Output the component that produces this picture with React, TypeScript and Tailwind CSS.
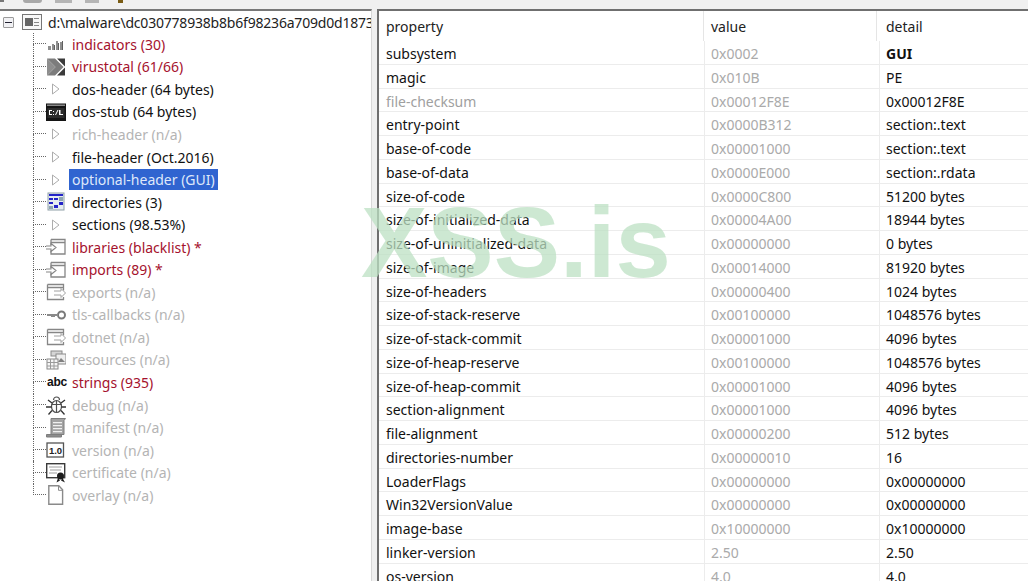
import type { ReactNode } from "react";

type Tone = "red" | "black" | "gray" | "selected";

interface TreeItem {
  label: string;
  tone: Tone;
  icon: ReactNode;
}

function Svg({ children }: { children: ReactNode }) {
  return (
    <svg width="20" height="20" viewBox="0 0 20 20" className="shrink-0">
      {children}
    </svg>
  );
}

const Bars = (
  <Svg>
    <path d="M2 12h3v4H2zM6 10h2v6H6zM10 7h2v9h-2zM14 8h2v8h-2z" fill="#8f8f8f" />
    <path d="M8 11h1v5H8zM12 9h1v7h-1zM16 7h1v9h-1z" fill="#5f5f5f" />
  </Svg>
);
const VirusTotal = (
  <Svg>
    <path d="M1 1.500h8l8.500 8.500L9 18.500H1l8.500-8.500z" fill="#7c7c7c" />
    <path d="M1 1.500v17l8.500-8.500z" fill="#8e8e8e" />
    <path d="M11 1.500h8v8zM11 18.500h8v-8z" fill="#3a3a3a" />
  </Svg>
);
const Arrow = (
  <Svg>
    <path d="M6.500 5l6.500 5-6.500 5z" fill="#fff" stroke="#adadad" />
  </Svg>
);
const Console = (
  <Svg>
    <rect x="0" y="1.500" width="20" height="17.500" fill="#141414" />
    <rect x="1" y="2.500" width="18" height="1.500" fill="#8a8a8a" />
    <rect x="1.500" y="6" width="17" height="10" fill="#2c2c2c" />
    <path d="M3 8h3v1H4v3h2v1H3zM7 9h1v1H7zM7 12h1v1H7zM9 13l2.500-5h1L10 13zM13 8h1.500v4H17v1h-4z" fill="#fff" />
  </Svg>
);
const Directories = (
  <Svg>
    <rect x="2" y="1" width="16" height="17" fill="#e6edf0" stroke="#8fa0a8" />
    <path d="M3 2h14v2H3zM3 6h4v2H3zM8 6h4v2H8zM3 10h4v2H3zM13 10h4v3h-4zM8 13h4v3H8z" fill="#2424c8" />
    <path d="M13 5h4v4h-4zM3 14h4v3H3z" fill="#8fa6b2" />
  </Svg>
);
const LibraryIn = (
  <Svg>
    <path d="M5 2.500h14v14.500H5v-3.500M5 8V2.500M5 5.500h14" fill="#fff" stroke="#868686" strokeWidth="1.300" />
    <path d="M0 9h5V6.500l5 4-5 4V12H0" fill="#fff" stroke="#868686" strokeWidth="1.100" />
  </Svg>
);
const LibraryOut = (
  <Svg>
    <path d="M1.500 2.500h16v6M17.500 15v2.500h-16v-15M1.500 5.500h16" fill="#fff" stroke="#868686" strokeWidth="1.300" />
    <path d="M8 9h7V6.500l4.500 4.500-4.500 4.500V13H8" fill="#fff" stroke="#a0a0a0" />
  </Svg>
);
const Key = (
  <Svg>
    <circle cx="15.500" cy="10" r="3.500" fill="#fff" stroke="#7a7a7a" strokeWidth="2" />
    <path d="M1 9h11v2H9v1H5v-1H1z" fill="#8a8a8a" />
  </Svg>
);
const Resources = (
  <Svg>
    <rect x="5" y="1" width="11" height="5" fill="#d5d5d5" stroke="#8a8a8a" />
    <rect x="10" y="4" width="10" height="10" fill="#eee" stroke="#8a8a8a" />
    <path d="M12 12l3-4 4 4z" fill="#808080" />
    <rect x="1" y="9" width="11" height="10" fill="#f6f6f6" stroke="#8a8a8a" />
    <path d="M4.500 9v10M8 9v10M1 12.500h11M1 16h11" stroke="#9a9a9a" />
  </Svg>
);
const Abc = (
  <span className="w-[20px] shrink-0 pl-px font-['Liberation_Sans',sans-serif] text-[12px] leading-none font-bold tracking-[-0.2px] text-[#111]">
    abc
  </span>
);
const Bug = (
  <Svg>
    <ellipse cx="10.500" cy="11.500" rx="5" ry="6" fill="#fff" stroke="#4f4f4f" strokeWidth="1.200" />
    <path d="M10.500 5.500v12M5.500 9.500h10M7.500 5a3 3 0 0 1 6 0" fill="#fff" stroke="#4f4f4f" strokeWidth="1.200" />
    <path d="M6 8L2 5M5.500 12H0M6 15.500l-3.500 4M15 8l4-3M15.500 12H20M15 15.500l3.500 4" fill="none" stroke="#333" strokeWidth="1.300" />
  </Svg>
);
const Manifest = (
  <Svg>
    <path d="M5 0.500h14.500l-1.500 2v14H5z" fill="#a3a3a3" stroke="#7d7d7d" />
    <path d="M0.500 16.500h15v2.500H0.500z" fill="#8c8c8c" stroke="#7d7d7d" />
    <path d="M7 4h9v1.200H7zM7 7h9v1.200H7zM7 10h9v1.200H7zM7 13h9v1.200H7z" fill="#f0f0f0" />
  </Svg>
);
const Version = (
  <Svg>
    <rect x="1" y="3" width="16.500" height="14" fill="#fff" stroke="#555" strokeWidth="1.300" />
    <text x="9.500" y="13.500" textAnchor="middle" fontSize="9.500" fontWeight="700" fill="#222" fontFamily="'Liberation Sans', sans-serif">
      1.0
    </text>
  </Svg>
);
const Certificate = (
  <Svg>
    <rect x="0.700" y="0.700" width="18" height="14" fill="#fff" stroke="#3a3a3a" strokeWidth="1.400" />
    <path d="M3 4h13M4 7h11M3 10h8" stroke="#9c9c9c" />
    <circle cx="14.500" cy="13" r="3.500" fill="#1c1c1c" />
    <path d="M12 15l-1.500 4.500 3.500-2zM16.500 15l2.500 4.500-4-2z" fill="#1c1c1c" />
  </Svg>
);
const Overlay = (
  <Svg>
    <path d="M2.800 0.800h10l3.800 4v14.400H2.800z" fill="#fff" stroke="#8a8a8a" strokeWidth="1.400" />
    <path d="M12.500 1v4.300h4" fill="none" stroke="#8a8a8a" />
  </Svg>
);

const TREE: TreeItem[] = [
  { label: "indicators (30)", tone: "red", icon: Bars },
  { label: "virustotal (61/66)", tone: "red", icon: VirusTotal },
  { label: "dos-header (64 bytes)", tone: "black", icon: Arrow },
  { label: "dos-stub (64 bytes)", tone: "black", icon: Console },
  { label: "rich-header (n/a)", tone: "gray", icon: Arrow },
  { label: "file-header (Oct.2016)", tone: "black", icon: Arrow },
  { label: "optional-header (GUI)", tone: "selected", icon: Arrow },
  { label: "directories (3)", tone: "black", icon: Directories },
  { label: "sections (98.53%)", tone: "black", icon: Arrow },
  { label: "libraries (blacklist) *", tone: "red", icon: LibraryIn },
  { label: "imports (89) *", tone: "red", icon: LibraryIn },
  { label: "exports (n/a)", tone: "gray", icon: LibraryOut },
  { label: "tls-callbacks (n/a)", tone: "gray", icon: Key },
  { label: "dotnet (n/a)", tone: "gray", icon: LibraryOut },
  { label: "resources (n/a)", tone: "gray", icon: Resources },
  { label: "strings (935)", tone: "red", icon: Abc },
  { label: "debug (n/a)", tone: "gray", icon: Bug },
  { label: "manifest (n/a)", tone: "gray", icon: Manifest },
  { label: "version (n/a)", tone: "gray", icon: Version },
  { label: "certificate (n/a)", tone: "gray", icon: Certificate },
  { label: "overlay (n/a)", tone: "gray", icon: Overlay },
];

const ROWS: [string, string, string][] = [
  ["subsystem", "0x0002", "GUI"],
  ["magic", "0x010B", "PE"],
  ["file-checksum", "0x00012F8E", "0x00012F8E"],
  ["entry-point", "0x0000B312", "section:.text"],
  ["base-of-code", "0x00001000", "section:.text"],
  ["base-of-data", "0x0000E000", "section:.rdata"],
  ["size-of-code", "0x0000C800", "51200 bytes"],
  ["size-of-initialized-data", "0x00004A00", "18944 bytes"],
  ["size-of-uninitialized-data", "0x00000000", "0 bytes"],
  ["size-of-image", "0x00014000", "81920 bytes"],
  ["size-of-headers", "0x00000400", "1024 bytes"],
  ["size-of-stack-reserve", "0x00100000", "1048576 bytes"],
  ["size-of-stack-commit", "0x00001000", "4096 bytes"],
  ["size-of-heap-reserve", "0x00100000", "1048576 bytes"],
  ["size-of-heap-commit", "0x00001000", "4096 bytes"],
  ["section-alignment", "0x00001000", "4096 bytes"],
  ["file-alignment", "0x00000200", "512 bytes"],
  ["directories-number", "0x00000010", "16"],
  ["LoaderFlags", "0x00000000", "0x00000000"],
  ["Win32VersionValue", "0x00000000", "0x00000000"],
  ["image-base", "0x10000000", "0x10000000"],
  ["linker-version", "2.50", "2.50"],
  ["os-version", "4.0", "4.0"],
];

const TONE_CLASS: Record<Tone, string> = {
  red: "text-[#a5122d]",
  black: "text-[#111]",
  gray: "text-[#b4b4b4]",
  selected: "bg-[#3064d0] text-[#dfe8fa]",
};

function TreeRow({ item, last }: { item: TreeItem; last: boolean }) {
  return (
    <div className="flex h-[22.55px] items-center">
      {/* dotted tree connector */}
      <div className="flex h-full w-[13px] shrink-0 flex-col">
        <div className="h-1/2 border-b border-l border-dotted border-[#666]" />
        {!last && <div className="h-1/2 border-l border-dotted border-[#666]" />}
      </div>
      <div className="flex w-[24px] shrink-0 items-center">{item.icon}</div>
      <span className={`ml-[-1px] px-[3px] leading-[21px] whitespace-nowrap ${TONE_CLASS[item.tone]}`}>
        {item.label}
      </span>
    </div>
  );
}

export default function App() {
  return (
    <div className="relative flex h-[581px] w-[1028px] flex-col overflow-hidden bg-[#f0f0f0] font-['Noto_Sans',sans-serif] text-[14px]">
      {/* clipped toolbar strip */}
      <div className="flex h-[9px] shrink-0 items-start">
        <div className="h-[2px] w-[4px] bg-[#777]" />
        <div className="ml-[19px] h-[3px] w-[19px] rounded-b-sm bg-[#a8a8a8]" />
        <div className="ml-[13px] h-[3px] w-[17px] bg-[#b5b5b5]" />
        <div className="ml-[13px] h-[3px] w-[14px] bg-[#b5b5b5]" />
        <div className="ml-[19px] h-[3px] w-[5px] bg-[#7a5c14]" />
      </div>

      <div className="flex min-h-0 flex-1">
        {/* tree pane */}
        <div className="flex w-[372px] shrink-0 flex-col overflow-hidden border-t-2 border-r border-t-[#777] border-r-[#d8d8d8] bg-white">
          <div className="flex h-[22px] shrink-0 items-center pl-[3px]">
            <div className="flex h-[11px] w-[11px] shrink-0 items-center justify-center rounded-[1px] border border-[#9a9a9a] bg-[#f1f1f4]">
              <div className="h-px w-[7px] bg-[#223]" />
            </div>
            <div className="ml-[8px] flex h-[16px] w-[20px] shrink-0 items-center gap-[1px] border border-[#777] bg-[#f8f8f8] px-[2px]">
              <div className="h-[8px] w-[8px] bg-[#666]" />
              <div className="flex h-[8px] w-[5px] flex-col justify-between">
                <div className="h-[1px] bg-[#888]" />
                <div className="h-[1px] bg-[#888]" />
                <div className="h-[1px] bg-[#888]" />
              </div>
            </div>
            <span className="ml-[6px] tracking-[-0.2px] whitespace-nowrap text-[#222]">
              d:\malware\dc030778938b8b6f98236a709d0d18733
            </span>
          </div>
          <div className="ml-[33px] w-fit">
            {TREE.map((item, i) => (
              <TreeRow key={item.label} item={item} last={i === TREE.length - 1} />
            ))}
          </div>
        </div>

        {/* splitter */}
        <div className="w-[5px] shrink-0 bg-[#f0f0f0]" />

        {/* property table */}
        <div className="flex min-w-0 flex-1 flex-col overflow-hidden border-t-2 border-l-2 border-[#6f6f6f] bg-white">
          <div className="flex h-[30px] shrink-0 leading-[31px] text-[#222]">
            <div className="w-[325px] border-r border-[#e5e5e5] pl-[7px]">property</div>
            <div className="w-[173px] border-r border-[#e5e5e5] pl-[7px]">value</div>
            <div className="pl-[9px]">detail</div>
          </div>
          {ROWS.map(([prop, value, detail]) => (
            <div key={prop} className="flex h-[23.76px] shrink-0 border-b border-[#ececec] leading-[25px]">
              <div className={`w-[326px] border-r border-[#ececec] pl-[7px] ${prop === "file-checksum" ? "text-[#a0a0a0]" : "text-[#111]"}`}>
                {prop}
              </div>
              <div className="w-[175px] border-r border-[#ececec] pl-[6px] text-[#aaa]">{value}</div>
              <div className={`pl-[6px] text-[#111] ${detail === "GUI" ? "font-bold" : ""}`}>{detail}</div>
            </div>
          ))}
        </div>
      </div>

      {/* watermark */}
      <div className="pointer-events-none absolute top-[188px] left-[361px] font-['Liberation_Sans',sans-serif] text-[99.5px] leading-[110px] font-bold text-[#bce0c3]/75">
        XSS.is
      </div>
    </div>
  );
}
